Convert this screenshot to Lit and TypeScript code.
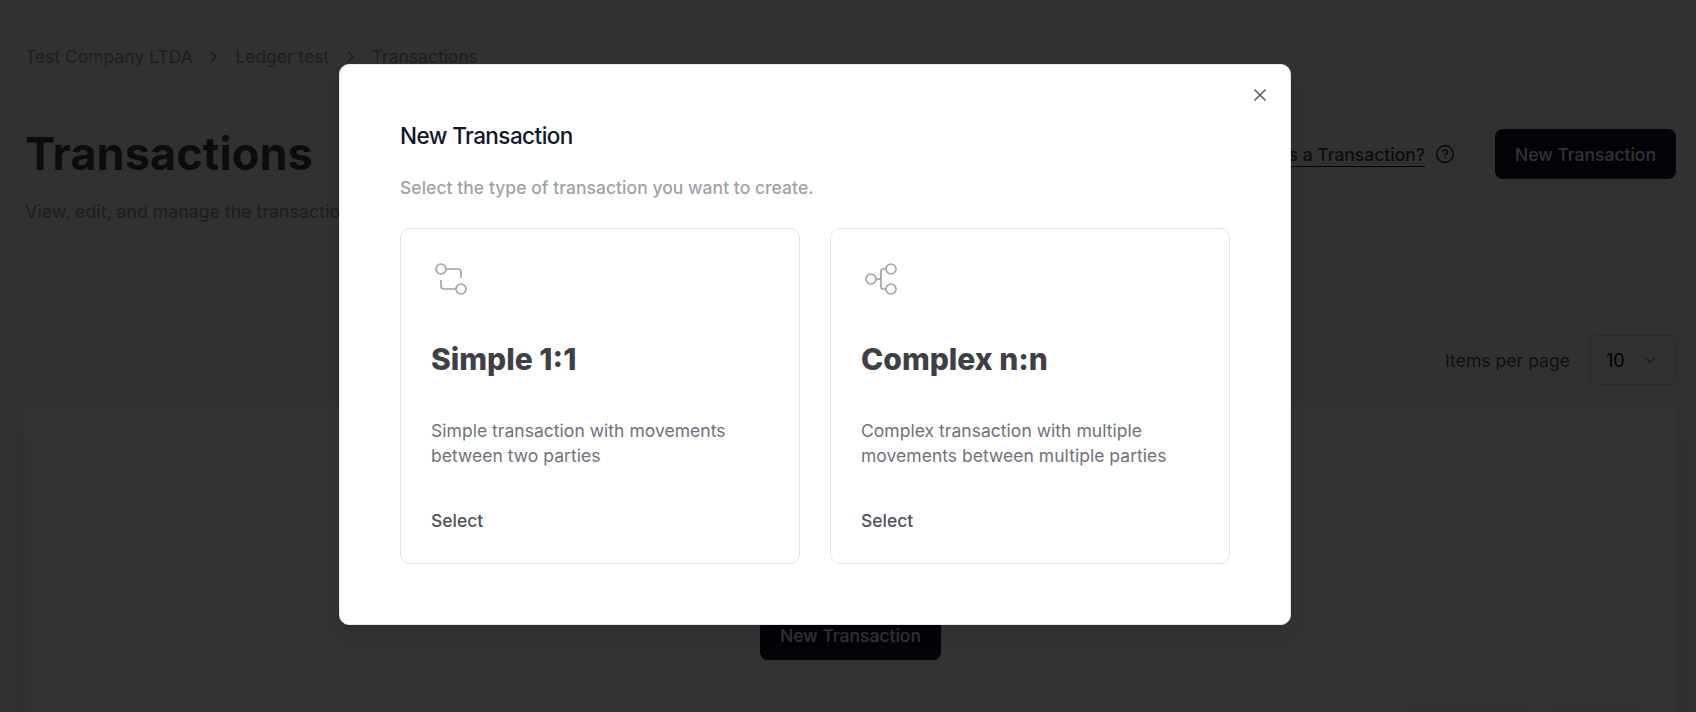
import {LitElement, html, css, svg} from 'lit';
import {customElement, property} from 'lit/decorators.js';

const simpleIcon = svg`
  <circle cx="6" cy="6" r="3" />
  <circle cx="18" cy="18" r="3" />
  <path d="M9 6h7.2a1.8 1.8 0 0 1 1.8 1.8V11.4" />
  <path d="M6 12.6v3.6A1.8 1.8 0 0 0 7.8 18H15" />
`;

const complexIcon = svg`
  <circle cx="6" cy="12" r="3" />
  <circle cx="18" cy="6" r="3" />
  <circle cx="18" cy="18" r="3" />
  <path d="M15 6h-2a1 1 0 0 0-1 1v10a1 1 0 0 0 1 1h2" />
  <path d="M9 12h3" />
`;

@customElement('transaction-option')
class TransactionOption extends LitElement {
  @property() heading = '';
  @property() description = '';
  @property({attribute: false}) icon: unknown = null;

  static styles = css`
    :host {
      display: block;
    }

    .card {
      display: flex;
      flex-direction: column;
      align-items: flex-start;
      gap: 40px;
      box-sizing: border-box;
      padding: 30px;
      border: 1px solid #e4e4e7;
      border-radius: 10px;
      cursor: pointer;
    }

    .icon {
      display: block;
      width: 40px;
      height: 40px;
      fill: none;
      stroke: #a1a1aa;
      stroke-width: 1;
    }

    .heading {
      margin: 0;
      font-size: 30px;
      line-height: 40px;
      font-weight: 800;
      color: #3f3f46;
    }

    .description {
      margin: -1px 0 1px;
      color: #71717a;
      line-height: 25px;
      letter-spacing: 0.03px;
    }

    .select {
      margin: -1px 0 0;
      padding: 0;
      border: none;
      background: none;
      font: inherit;
      font-weight: 500;
      line-height: 25px;
      color: #52525b;
    }
  `;

  render() {
    return html`
      <div class="card">
        <svg class="icon" viewBox="0 0 24 24">${this.icon}</svg>
        <h3 class="heading">${this.heading}</h3>
        <p class="description">${this.description}</p>
        <button class="select">Select</button>
      </div>
    `;
  }
}

@customElement('transaction-modal')
class TransactionModal extends LitElement {
  static styles = css`
    .overlay {
      position: absolute;
      inset: 0;
      background: rgba(0, 0, 0, 0.8);
    }

    .modal {
      position: absolute;
      left: 339px;
      top: 64px;
      width: 952px;
      box-sizing: border-box;
      padding: 60px;
      border: 1px solid #e2e8f0;
      border-radius: 10px;
      background: #fff;
      box-shadow: 0 12px 18px -4px rgba(0, 0, 0, 0.1),
        0 5px 8px -5px rgba(0, 0, 0, 0.1);
    }

    .title {
      margin: 0 0 29px;
      font-size: 22.5px;
      line-height: 21px;
      font-weight: 500;
      letter-spacing: -0.025em;
      color: #0f172a;
    }

    .subtitle {
      margin: 0 0 28px;
      line-height: 25px;
      font-weight: 500;
      letter-spacing: 0.04px;
      color: #a1a1aa;
    }

    .options {
      display: grid;
      grid-template-columns: 400px 400px;
      gap: 30px;
    }

    .close {
      position: absolute;
      top: 20px;
      right: 20px;
      display: flex;
      padding: 0;
      border: none;
      background: none;
      cursor: pointer;
    }

    .closeIcon {
      width: 20px;
      height: 20px;
      fill: none;
      stroke: #575d6a;
      stroke-width: 2;
      stroke-linecap: round;
    }
  `;

  render() {
    return html`
      <div class="overlay"></div>
      <div class="modal" role="dialog">
        <h2 class="title">New Transaction</h2>
        <p class="subtitle">Select the type of transaction you want to create.</p>
        <div class="options">
          <transaction-option
            heading="Simple 1:1"
            description="Simple transaction with movements between two parties"
            .icon=${simpleIcon}
          ></transaction-option>
          <transaction-option
            heading="Complex n:n"
            description="Complex transaction with multiple movements between multiple parties"
            .icon=${complexIcon}
          ></transaction-option>
        </div>
        <button class="close" aria-label="Close">
          <svg class="closeIcon" viewBox="0 0 24 24">
            <path d="M18 6 6 18M6 6l12 12" />
          </svg>
        </button>
      </div>
    `;
  }
}

@customElement('app-root')
class AppRoot extends LitElement {
  static styles = css`
    :host {
      display: block;
      position: relative;
      height: 712px;
      overflow: hidden;
      background: #f5f5f6;
      font-family: Inter, sans-serif;
      font-size: 17.5px;
      line-height: 25px;
    }

    .page {
      display: flex;
      flex-direction: column;
      height: 100%;
      box-sizing: border-box;
      padding: 44px 20px 0 25px;
    }

    .breadcrumb {
      display: flex;
      align-items: center;
      gap: 12.5px;
      color: #95959f;
    }

    .chevron {
      width: 17.5px;
      height: 17.5px;
      fill: none;
      stroke: #808086;
      stroke-width: 2;
      stroke-linecap: round;
      stroke-linejoin: round;
    }

    .header {
      display: flex;
      flex-shrink: 0;
      justify-content: space-between;
      align-items: flex-start;
      height: 155px;
      margin-top: 60px;
      border-bottom: 1px solid #e4e4e7;
    }

    .title {
      margin: 0 0 20px;
      font-size: 45px;
      line-height: 50px;
      font-weight: 700;
      letter-spacing: 0.1px;
      color: #3f3f46;
    }

    .subtitle {
      margin: 0;
      font-weight: 500;
      letter-spacing: 0.04px;
      color: #9b9ba5;
    }

    .actions {
      display: flex;
      align-items: center;
    }

    .help {
      display: flex;
      align-items: center;
      gap: 10px;
      margin-right: 40px;
    }

    .helpLink {
      padding-top: 2px;
      line-height: 23px;
      border-bottom: 1px solid #18181b;
      color: #3f3f46;
      font-weight: 500;
    }

    .helpIcon {
      width: 20px;
      height: 20px;
      fill: none;
      stroke: #3f3f46;
      stroke-width: 2;
      stroke-linecap: round;
      stroke-linejoin: round;
    }

    .button {
      height: 50px;
      width: 181px;
      padding: 0;
      border: none;
      border-radius: 7.5px;
      background: #0f172a;
      color: #f8fafc;
      font: inherit;
      font-weight: 500;
      cursor: pointer;
    }

    .toolbar {
      display: flex;
      flex-shrink: 0;
      justify-content: flex-end;
      align-items: center;
      gap: 20px;
      margin-top: 50px;
      letter-spacing: 0.05px;
      color: #52525b;
    }

    .pageSize {
      display: flex;
      align-items: center;
      justify-content: space-between;
      box-sizing: border-box;
      width: 86px;
      height: 50px;
      padding: 0 15px;
      border: 1px solid #c8c8cd;
      border-radius: 7.5px;
      font-size: 18px;
      color: #000;
    }

    .pageSizeIcon {
      width: 20px;
      height: 20px;
      fill: none;
      stroke: #808086;
      stroke-width: 1.8;
      stroke-linecap: round;
      stroke-linejoin: round;
    }

    .panel {
      display: flex;
      flex-direction: column;
      flex: 1;
      min-height: 0;
      margin-top: 20px;
      border-radius: 10px 10px 0 0;
      background: #fff;
      box-shadow: 0 25px 25px rgba(0, 0, 0, 0.1);
    }

    .empty {
      display: flex;
      flex-shrink: 0;
      justify-content: center;
      align-items: flex-end;
      height: 286px;
      padding-bottom: 30px;
      box-sizing: border-box;
      border-bottom: 1px solid #f0f0f2;
    }

    .pagination {
      display: flex;
      justify-content: flex-end;
      gap: 14px;
      min-height: 0;
      padding: 19px 33px 0 0;
      overflow: hidden;
    }

    .pageButton {
      box-sizing: border-box;
      width: 97px;
      height: 45px;
      border: 1px solid #e4e4e7;
      border-radius: 7.5px;
    }

    .pageButton.wide {
      width: 130px;
    }
  `;

  renderChevron() {
    return html`
      <svg class="chevron" viewBox="0 0 24 24"><path d="m9 18 6-6-6-6" /></svg>
    `;
  }

  render() {
    return html`
      <div class="page">
        <nav class="breadcrumb">
          <span>Test Company LTDA</span>
          ${this.renderChevron()}
          <span>Ledger test</span>
          ${this.renderChevron()}
          <span>Transactions</span>
        </nav>

        <header class="header">
          <div>
            <h1 class="title">Transactions</h1>
            <p class="subtitle">
              View, edit, and manage the transactions of a specific ledger.
            </p>
          </div>
          <div class="actions">
            <div class="help">
              <span class="helpLink">What is a Transaction?</span>
              <svg class="helpIcon" viewBox="0 0 24 24">
                <circle cx="12" cy="12" r="10" />
                <path d="M9.1 9a3 3 0 0 1 5.8 1c0 2-3 3-3 3M12 17h.01" />
              </svg>
            </div>
            <button class="button">New Transaction</button>
          </div>
        </header>

        <div class="toolbar">
          <span>Items per page</span>
          <div class="pageSize">
            <span>10</span>
            <svg class="pageSizeIcon" viewBox="0 0 24 24">
              <path d="m6 9 6 6 6-6" />
            </svg>
          </div>
        </div>

        <section class="panel">
          <div class="empty">
            <button class="button">New Transaction</button>
          </div>
          <div class="pagination">
            <div class="pageButton wide"></div>
            <div class="pageButton"></div>
          </div>
        </section>
      </div>
      <transaction-modal></transaction-modal>
    `;
  }
}
